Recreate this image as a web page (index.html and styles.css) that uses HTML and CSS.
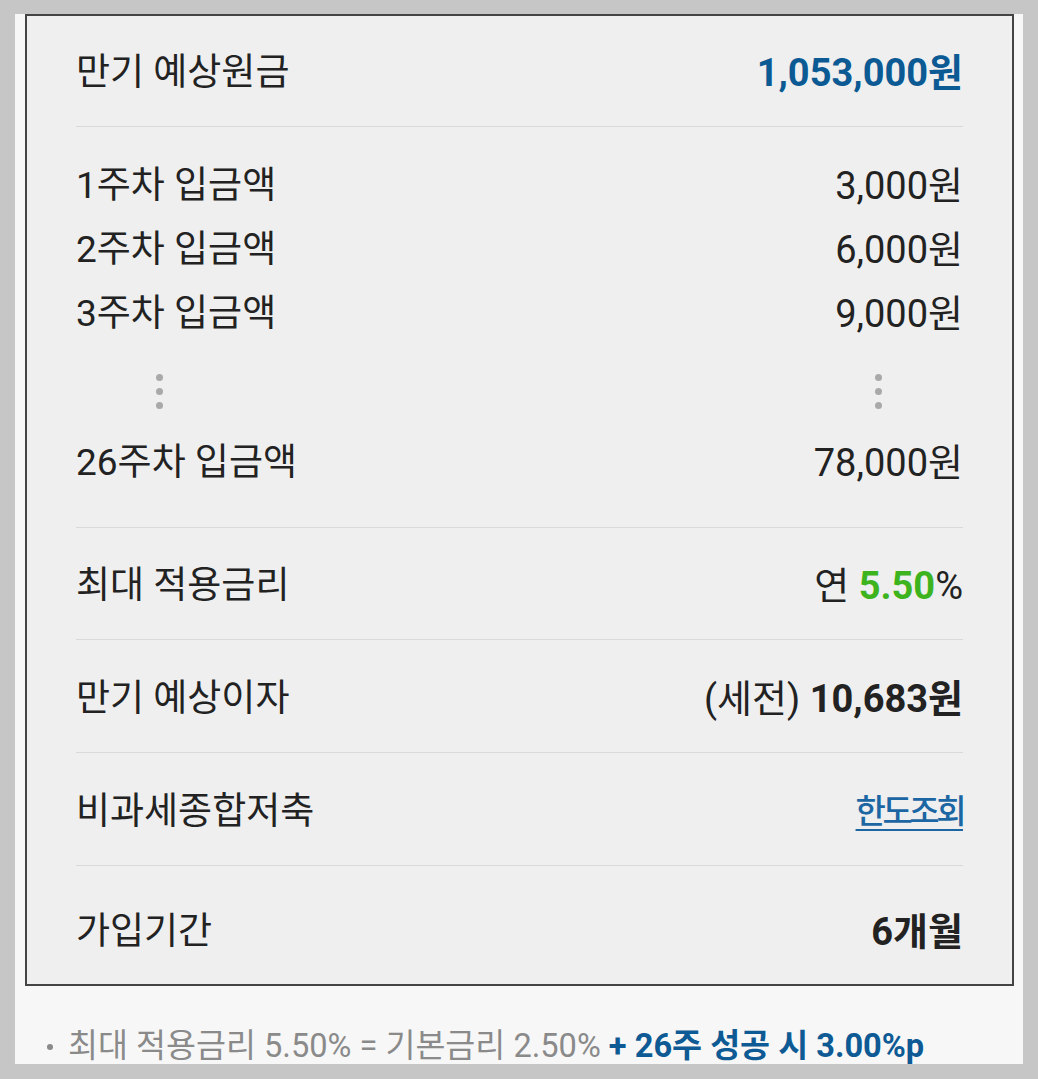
FILE: index.html
```html
<!DOCTYPE html>
<html lang="ko">
<head>
    <meta charset="UTF-8">
    <meta name="viewport" content="width=device-width, initial-scale=1.0">
    <title>26주 적금</title>
    <link rel="stylesheet" href="styles.css">
</head>
<body>
    <div class="panel">
        <div class="summary-card">
            <div class="section first">
                <div class="row">
                    <span class="label">만기 예상원금</span>
                    <span class="value blue bold">1,053,000원</span>
                </div>
            </div>

            <div class="section weeks">
                <div class="row week">
                    <span class="label">1주차 입금액</span>
                    <span class="value">3,000원</span>
                </div>
                <div class="row week">
                    <span class="label">2주차 입금액</span>
                    <span class="value">6,000원</span>
                </div>
                <div class="row week">
                    <span class="label">3주차 입금액</span>
                    <span class="value">9,000원</span>
                </div>
                <div class="ellipsis">
                    <div class="dots"><i></i><i></i><i></i></div>
                    <div class="dots"><i></i><i></i><i></i></div>
                </div>
                <div class="row week">
                    <span class="label">26주차 입금액</span>
                    <span class="value">78,000원</span>
                </div>
            </div>

            <div class="section rate">
                <div class="row">
                    <span class="label">최대 적용금리</span>
                    <span class="value">연 <b class="green">5.50</b>%</span>
                </div>
            </div>

            <div class="section">
                <div class="row">
                    <span class="label">만기 예상이자</span>
                    <span class="value">(세전) <b>10,683원</b></span>
                </div>
            </div>

            <div class="section">
                <div class="row">
                    <span class="label">비과세종합저축</span>
                    <a class="value link" href="#">한도조회</a>
                </div>
            </div>

            <div class="section last">
                <div class="row">
                    <span class="label">가입기간</span>
                    <span class="value bold">6개월</span>
                </div>
            </div>
        </div>

        <p class="note">최대 적용금리 5.50% = 기본금리 2.50% <b>+ 26주 성공 시 3.00%p</b></p>
    </div>
</body>
</html>
```

FILE: styles.css
```css
body {
    margin: 0;
    background: #c6c6c6;
    font-family: Roboto, "Noto Sans CJK KR", sans-serif;
    color: #222;
}
.panel {
    width: 1008px;
    height: 1050px;
    margin: 14px 0 0 15px;
    background: #f7f7f7;
    overflow: hidden;
}
.summary-card {
    width: 989px;
    margin-left: 10px;
    box-sizing: border-box;
    border: 2px solid #444;
    background: #efefef;
    padding: 0 49px;
}
.section {
    padding: 35px 0 29px;
    border-bottom: 1px solid #d9d9d9;
}
.section.first {
    padding-top: 33px;
}
.section.rate {
    padding-top: 34px;
}
.section.last {
    padding: 42px 0 28px;
    border-bottom: none;
}
.row {
    display: flex;
    justify-content: space-between;
    align-items: center;
    font-size: 37px;
    line-height: 48px;
}
.row .value {
    font-size: 38px;
}
.weeks {
    padding: 27px 0 32px;
}
.row.week {
    line-height: 64px;
}
.ellipsis {
    height: 85px;
    display: flex;
    justify-content: space-between;
    align-items: center;
    padding: 0 81px 0 80px;
}
.dots {
    display: flex;
    flex-direction: column;
    gap: 7px;
    margin-top: 6px;
}
.dots i {
    display: block;
    width: 7px;
    height: 7px;
    border-radius: 50%;
    background: #a9a9a9;
}
.bold, b {
    font-weight: 700;
}
.blue {
    color: #0c5a94;
}
.green {
    color: #3db41d;
}
.row .link {
    font-size: 33px;
    font-weight: 500;
    letter-spacing: -3.5px;
    color: #1b66a3;
    text-decoration: underline;
    text-underline-offset: 6px;
    text-decoration-thickness: 2px;
}
.note {
    position: relative;
    margin: 40px 0 0;
    padding-left: 53px;
    font-size: 32.6px;
    line-height: 40px;
    color: #8a8a8a;
    white-space: nowrap;
}
.note::before {
    content: "";
    position: absolute;
    left: 32px;
    top: 18px;
    width: 6px;
    height: 6px;
    border-radius: 50%;
    background: #8a8a8a;
}
.note b {
    color: #0e5a94;
}
```
